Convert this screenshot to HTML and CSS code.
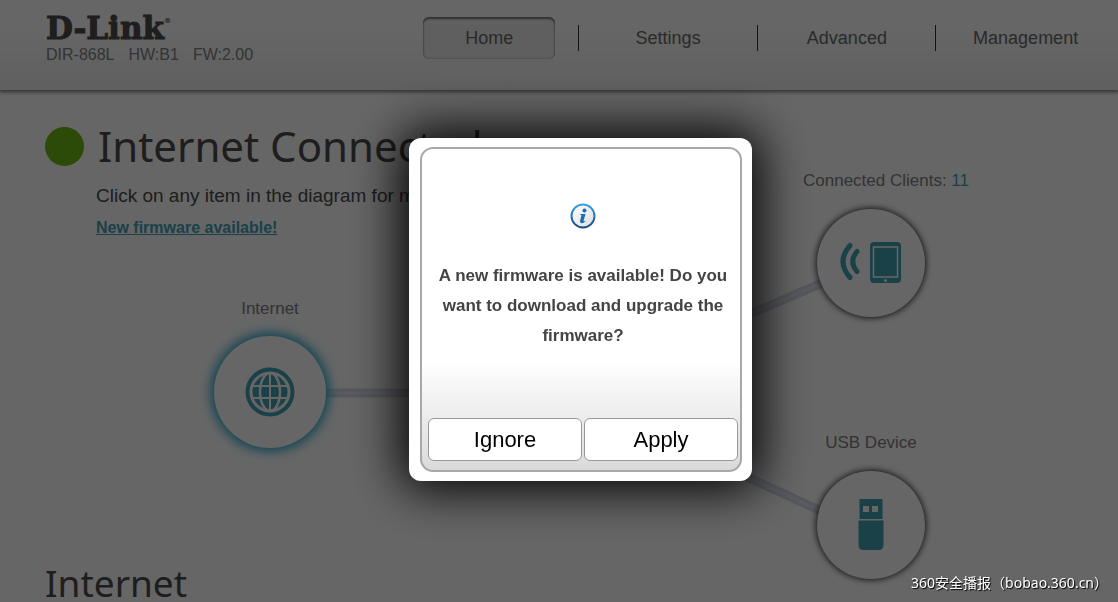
FILE: index.html
```html
<!DOCTYPE html>
<html lang="en">
<head>
    <meta charset="UTF-8">
    <meta name="viewport" content="width=device-width, initial-scale=1.0">
    <title>D-Link DIR-868L</title>
    <link rel="stylesheet" href="styles.css">
</head>
<body>
    <header class="header">
        <div class="brand">
            <a class="logo" href="#">D-Link<sup>®</sup></a>
            <div class="version">
                <span>DIR-868L</span>
                <span>HW:B1</span>
                <span>FW:2.00</span>
            </div>
        </div>
        <nav class="menu">
            <a class="menu-item active" href="#"><span>Home</span></a>
            <a class="menu-item" href="#"><span>Settings</span></a>
            <a class="menu-item" href="#"><span>Advanced</span></a>
            <a class="menu-item" href="#"><span>Management</span></a>
        </nav>
    </header>

    <main class="home">
        <section class="status">
            <div class="status-light"></div>
            <div class="status-text">
                <h1>Internet Connected</h1>
                <p>Click on any item in the diagram for more information.</p>
                <a class="firmware-link" href="#">New firmware available!</a>
            </div>
        </section>

        <!-- Network diagram -->
        <section class="diagram">
            <svg class="lines" aria-hidden="true">
                <g class="line-outer">
                    <path d="M270 298H580" />
                    <path d="M580 292L871 167" />
                    <path d="M580 305L871 439" />
                </g>
                <g class="line-inner">
                    <path d="M270 298H580" />
                    <path d="M580 292L871 167" />
                    <path d="M580 305L871 439" />
                </g>
            </svg>

            <div class="node node-internet">
                <span class="node-label">Internet</span>
                <a class="circle selected" href="#" aria-label="Internet">
                    <svg width="50" height="50" viewBox="0 0 50 50">
                        <circle cx="25" cy="25" r="22.5" fill="none" stroke="#43a0b5" stroke-width="4" />
                        <circle cx="25" cy="25" r="17.5" fill="#43a0b5" />
                        <g fill="none" stroke="#fff" stroke-width="2">
                            <path d="M25 7v36M7 19h36M7 31h36" />
                            <ellipse cx="25" cy="25" rx="10" ry="19" stroke-width="2.5" />
                        </g>
                    </svg>
                </a>
            </div>

            <div class="node node-clients">
                <span class="node-label">Connected Clients: <b>11</b></span>
                <a class="circle" href="#" aria-label="Connected Clients">
                    <svg width="62" height="42" viewBox="0 0 62 42">
                        <g fill="none" stroke="#43a0b5" stroke-width="5" stroke-linecap="round">
                            <path d="M10 3.5Q-4 19.5 10 35.500" />
                            <path d="M17 9.5Q8.500 19.5 17 29.5" />
                        </g>
                        <rect x="30" y="0" width="31" height="41" rx="4" fill="#43a0b5" />
                        <rect x="33.5" y="5" width="24" height="30" fill="none" stroke="#fff" stroke-width="1.5" />
                        <circle cx="45.5" cy="38.500" r="1.5" fill="#fff" />
                    </svg>
                </a>
            </div>

            <div class="node node-usb">
                <span class="node-label">USB Device</span>
                <a class="circle" href="#" aria-label="USB Device">
                    <svg width="26" height="52" viewBox="0 0 26 52">
                        <path fill="#43a0b5" fill-rule="evenodd" d="M1.5 0h23v20h-23zM5 7v6h6V7zM14 7v6h6V7z" />
                        <path fill="#43a0b5" d="M.5 21.5h25V46q0 5-5 5h-15q-5 0-5-5z" />
                    </svg>
                </a>
            </div>
        </section>

        <h2>Internet</h2>
    </main>

    <!-- Firmware popup -->
    <div class="overlay">
        <div class="popup" role="dialog" aria-labelledby="popupText">
            <div class="popup-inner">
                <div class="popup-body">
                    <svg class="info-icon" width="26" height="26" viewBox="0 0 26 26">
                        <defs>
                            <linearGradient id="ring" x1="0" y1="0" x2="0" y2="1">
                                <stop offset="0" stop-color="#3a9fe0" />
                                <stop offset="1" stop-color="#1c4a80" />
                            </linearGradient>
                            <linearGradient id="face" x1="0" y1="0" x2="1" y2="1">
                                <stop offset="0" stop-color="#fff" />
                                <stop offset="1" stop-color="#dcdcdc" />
                            </linearGradient>
                        </defs>
                        <circle cx="13" cy="13" r="11.5" fill="url(#face)" stroke="url(#ring)" stroke-width="2" />
                        <circle cx="14.5" cy="7.5" r="2" fill="#1b6cb5" />
                        <path d="M10.5 11h5l-2 7q0 .8 1.700-.3l.3.600q-2.5 2.5-4.5 1.700q-1.500-.6-.8-2.700l1.300-5l-1.200-.4z" fill="#1b6cb5" />
                    </svg>
                    <p id="popupText">A new firmware is available! Do you want to download and upgrade the firmware?</p>
                </div>
                <div class="popup-buttons">
                    <button type="button">Ignore</button>
                    <button type="button">Apply</button>
                </div>
            </div>
        </div>
    </div>

    <div class="watermark">360安全播报（bobao.360.cn）</div>
</body>
</html>
```
FILE: styles.css
```css
* {
    margin: 0;
    padding: 0;
    box-sizing: border-box;
}

body {
    background-color: #fff;
    color: #4b4b4b;
    font-family: "Liberation Sans", Arial, sans-serif;
    font-size: 17px;
    height: 100vh;
    overflow: hidden;
}

a {
    color: inherit;
    text-decoration: none;
}

/* Header */
.header {
    display: flex;
    justify-content: space-between;
    height: 90px;
    padding: 0 3px 0 46px;
    background: linear-gradient(#fff 30%, #efefef);
    box-shadow: 0 1px 4px 1px #777;
}

.brand {
    padding-top: 12px;
}

.logo {
    display: block;
    font-family: "DejaVu Serif", serif;
    font-size: 31px;
    font-weight: bold;
    line-height: 33px;
    -webkit-text-stroke: 1px #4b4b4b;
}

.logo sup {
    font-size: 7px;
    line-height: 1;
    vertical-align: 16px;
    -webkit-text-stroke: 0;
}

.version {
    display: flex;
    gap: 14px;
    color: #828282;
    font-size: 16px;
    line-height: 20px;
}

.menu {
    display: grid;
    grid-template-columns: repeat(4, 1fr);
    flex: 0 1 715px;
    padding-top: 17px;
    color: #696969;
    font-size: 18px;
}

.menu-item {
    display: flex;
    align-items: center;
    justify-content: center;
    height: 42px;
    background: linear-gradient(#333, #333) right 8px / 1px 26px no-repeat;
}

.menu-item:last-child {
    background: none;
}

.menu-item span {
    width: 132px;
    line-height: 42px;
    text-align: center;
}

.menu-item.active span {
    border-radius: 6px;
    background-color: #ededed;
    box-shadow: inset 0 2px 2px #777, inset 0 0 2px #888;
}

/* Home page */
.home {
    display: grid;
    padding-top: 5px;
}

.status {
    grid-area: 1 / 1;
    display: flex;
    align-items: flex-start;
    gap: 12px;
    padding: 32px 0 0 45px;
}

.status-light {
    width: 39px;
    height: 39px;
    border-radius: 50%;
    background-color: #6fbb16;
}

h1,
h2 {
    font-family: "Noto Sans", Tahoma, sans-serif;
    font-weight: normal;
}

h1 {
    padding-left: 2px;
    font-size: 42px;
    line-height: 38px;
}

.status-text p {
    margin-top: 20px;
    font-size: 19px;
    line-height: 22px;
}

.firmware-link {
    display: inline-block;
    margin-top: 11px;
    color: #43a0b5;
    font-size: 16px;
    font-weight: bold;
    line-height: 20px;
    text-decoration: underline;
}

h2 {
    padding-left: 45px;
    font-size: 37px;
    line-height: 44px;
}

/* Diagram */
.diagram {
    grid-area: 1 / 1;
    position: relative;
    height: 466px;
}

.lines {
    position: absolute;
    width: 100%;
    height: 100%;
}

.line-outer {
    stroke: #d6d9e6;
    stroke-width: 9;
}

.line-inner {
    stroke: #e0e2ef;
    stroke-width: 3;
}

.node {
    position: absolute;
    display: flex;
    flex-direction: column;
    align-items: center;
    gap: 17px;
    width: 200px;
}

.node-internet {
    left: 170px;
    top: 204px;
}

.node-clients {
    left: 771px;
    top: 76px;
    gap: 18px;
}

.node-clients .node-label {
    padding-left: 30px;
}

.node-usb {
    left: 771px;
    top: 338px;
    gap: 18px;
}

.node-label {
    color: #808080;
    line-height: 20px;
    white-space: nowrap;
}

.node-label b {
    color: #43a0b5;
    font-weight: normal;
}

.circle {
    display: flex;
    align-items: center;
    justify-content: center;
    width: 108px;
    height: 108px;
    border-radius: 50%;
    background-color: #fff;
    box-shadow: 0 0 6px 1px #333;
}

.circle.selected {
    width: 112px;
    height: 112px;
    box-shadow: 0 0 12px 3px #1fa3c8;
}

/* Popup */
.overlay {
    position: fixed;
    inset: 0;
    display: flex;
    align-items: center;
    justify-content: center;
    padding: 17px 0 0 43px;
    background-color: rgba(0, 0, 0, 0.6);
}

.popup {
    width: 343px;
    padding: 9px 10px 9px 11px;
    border-radius: 12px;
    background-color: #fff;
    box-shadow: 0 0 50px 8px #000;
}

.popup-inner {
    padding: 0 2px 9px 6px;
    border: 2px solid #a8a8a8;
    border-radius: 13px;
    background: linear-gradient(#fff 66%, #dadada);
}

.popup-body {
    display: flex;
    flex-direction: column;
    align-items: center;
    gap: 32px;
    height: 269px;
    padding-top: 54px;
}

.popup-body p {
    color: #444;
    font-weight: bold;
    line-height: 30px;
    text-align: center;
}

.popup-buttons {
    display: grid;
    grid-template-columns: 1fr 1fr;
    gap: 2px;
}

.popup-buttons button {
    height: 43px;
    border: 1px solid #999;
    border-radius: 6px;
    background-color: #fff;
    color: #000;
    font-family: inherit;
    font-size: 22px;
}

.watermark {
    position: fixed;
    right: 10px;
    bottom: 9px;
    color: #fff;
    font-family: "Noto Sans", "Noto Sans CJK SC", sans-serif;
    font-size: 14px;
    line-height: 20px;
    text-shadow: 1px 1px 1px #000;
}
```
